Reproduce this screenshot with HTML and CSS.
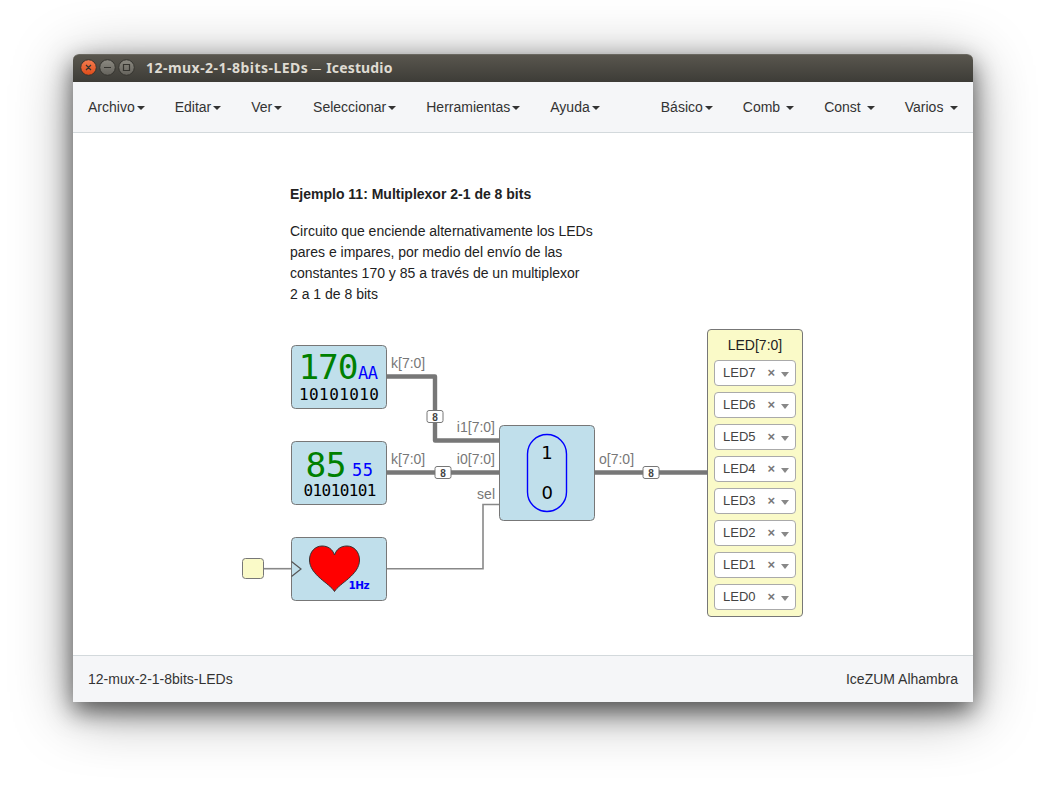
FILE: index.html
```html
<!DOCTYPE html>
<html lang="es">
<head>
<meta charset="utf-8">
<title>12-mux-2-1-8bits-LEDs – Icestudio</title>
<link rel="stylesheet" href="styles.css">
</head>
<body>
<div class="window">
  <header class="titlebar">
    <svg class="controls" width="56" height="18" viewBox="0 0 56 18">
      <defs>
        <linearGradient id="close" x2="0" y2="1"><stop stop-color="#f47c50"/><stop offset="1" stop-color="#df4b18"/></linearGradient>
        <linearGradient id="plain" x2="0" y2="1"><stop stop-color="#8b8981"/><stop offset="1" stop-color="#65635c"/></linearGradient>
      </defs>
      <g stroke="#35342f" stroke-width="1">
        <circle cx="8.500" cy="8.500" r="7.800" fill="url(#close)"/>
        <circle cx="27.500" cy="8.500" r="7.800" fill="url(#plain)"/>
        <circle cx="46.500" cy="8.500" r="7.800" fill="url(#plain)"/>
        <path d="M6 6l5 5m0-5l-5 5M24 8.500h7M43.500 5.500h6v6h-6z" fill="none" stroke-width="1.200"/>
      </g>
    </svg>
    <span class="title">12-mux-2-1-8bits-LEDs</span><span class="dash">—</span><span class="app">Icestudio</span>
  </header>
  <nav class="menubar">
    <div class="menus">
      <a class="menu">Archivo<i class="caret"></i></a>
      <a class="menu">Editar<i class="caret"></i></a>
      <a class="menu">Ver<i class="caret"></i></a>
      <a class="menu wide">Seleccionar<i class="caret"></i></a>
      <a class="menu">Herramientas<i class="caret"></i></a>
      <a class="menu">Ayuda<i class="caret"></i></a>
    </div>
    <div class="menus">
      <a class="menu">Básico<i class="caret"></i></a>
      <a class="menu spaced">Comb<i class="caret"></i></a>
      <a class="menu spaced">Const<i class="caret"></i></a>
      <a class="menu spaced last">Varios<i class="caret"></i></a>
    </div>
  </nav>
  <main class="canvas">
    <svg class="diagram" width="900" height="522" viewBox="73 133 900 522">
      <g class="bus">
        <path d="M387 376.500H435V440.500H500"/>
        <path d="M387 472.500H500"/>
        <path d="M595 472.500H707"/>
      </g>
      <g class="wire">
        <path d="M387 568.700H483V504.500H500"/>
        <path d="M263 568.700H291"/>
      </g>
      <g class="block">
        <rect x="291.500" y="345.500" width="95" height="63" rx="4"/>
        <rect x="291.500" y="441.500" width="95" height="63" rx="4"/>
        <rect x="291.500" y="537.500" width="95" height="63" rx="4"/>
        <rect x="499.500" y="425.500" width="95" height="95" rx="4"/>
        <rect class="input" x="242.500" y="558.500" width="21" height="20" rx="3"/>
        <path class="clock" d="M291.500 561.500L301 569L291.500 576.500"/>
      </g>
      <g class="width">
        <rect x="427" y="410.500" width="16" height="12" rx="2"/>
        <rect x="435" y="466.500" width="16" height="12" rx="2"/>
        <rect x="643" y="466.500" width="16" height="12" rx="2"/>
        <text x="435" y="420.500">8</text>
        <text x="443" y="476.500">8</text>
        <text x="651" y="476.500">8</text>
      </g>
      <g class="port">
        <text x="391" y="368">k[7:0]</text>
        <text x="391" y="464">k[7:0]</text>
        <text x="599" y="464">o[7:0]</text>
        <text class="end" x="495" y="432">i1[7:0]</text>
        <text class="end" x="495" y="464">i0[7:0]</text>
        <text class="end" x="495" y="499">sel</text>
      </g>
      <g class="mono">
        <text class="dec" x="298.500" y="379" textLength="60">170</text>
        <text class="hex" x="358" y="379" textLength="20">AA</text>
        <text class="bin" x="299" y="400" textLength="80">10101010</text>
        <text class="dec" x="305.500" y="477" textLength="41">85</text>
        <text class="hex" x="352" y="475.500" textLength="21">55</text>
        <text class="bin" x="303.500" y="496" textLength="73">01010101</text>
      </g>
      <path class="heart" d="M334.500 591.500C330 583.500 309.500 575 309.500 560C309.500 552 315 546 322 546C328 546 332.500 549 334.500 555C336.500 549 341 546 347 546C354 546 359.500 552 359.500 560C359.500 575 339 583.500 334.500 591.500Z"/>
      <text class="freq" x="348.500" y="589" textLength="21">1Hz</text>
      <rect class="mux" x="527.500" y="434.500" width="39" height="77" rx="19.500"/>
      <text class="sel" x="547" y="459">1</text>
      <text class="sel" x="547.300" y="499">0</text>
    </svg>
    <section class="info">
      <h1>Ejemplo 11: Multiplexor 2-1 de 8 bits</h1>
      <p>Circuito que enciende alternativamente los LEDs<br>pares e impares, por medio del envío de las<br>constantes 170 y 85 a través de un multiplexor<br>2 a 1 de 8 bits</p>
    </section>
    <section class="leds">
      <h2>LED[7:0]</h2>
      <div class="select">LED7<b>×</b><i></i></div>
      <div class="select">LED6<b>×</b><i></i></div>
      <div class="select">LED5<b>×</b><i></i></div>
      <div class="select">LED4<b>×</b><i></i></div>
      <div class="select">LED3<b>×</b><i></i></div>
      <div class="select">LED2<b>×</b><i></i></div>
      <div class="select">LED1<b>×</b><i></i></div>
      <div class="select">LED0<b>×</b><i></i></div>
    </section>
  </main>
  <footer class="statusbar"><span>12-mux-2-1-8bits-LEDs</span><span>IceZUM Alhambra</span></footer>
</div>
</body>
</html>
```
FILE: styles.css
```css
* { box-sizing: border-box; }
body {
  margin: 0;
  padding: 54px 65px 83px 73px;
  height: 785px;
  overflow: hidden;
  background: #fff;
  color: #333;
  font: 14px/20px "Liberation Sans", Arial, sans-serif;
}
.window {
  display: flex;
  flex-direction: column;
  width: 900px;
  height: 648px;
  border-radius: 6px 6px 0 0;
  box-shadow: 0 9px 24px rgba(0,0,0,.58), 0 10px 60px rgba(0,0,0,.38);
}
.titlebar {
  display: flex;
  align-items: center;
  height: 28px;
  padding: 0 0 1px 7px;
  border-radius: 6px 6px 0 0;
  border-top: 1px solid #6a6860;
  background: linear-gradient(#59564e, #3d3c37);
  color: #dfdbd2;
  font: bold 14px/20px "Noto Sans", sans-serif;
  white-space: nowrap;
}
.title { margin-left: 10px; letter-spacing: .47px; }
.dash { width: 10px; margin: 0 5px 0 3px; font-size: 10px; font-weight: normal; }
.app { letter-spacing: .15px; }
.menubar {
  display: flex;
  justify-content: space-between;
  height: 51px;
  background: #f5f6f8;
  border-bottom: 1px solid #d3d9dc;
}
.menus { display: flex; }
.menu {
  display: flex;
  align-items: center;
  padding: 0 15px;
}
.wide { padding-left: 15.8px; }
.caret {
  margin: 1px 0 0 2px;
  border: 4px solid transparent;
  border-top-color: #333;
  border-bottom: 0;
}
.spaced .caret { margin-left: 6px; }
.last .caret { margin-left: 6.6px; }
.canvas {
  position: relative;
  height: 522px;
  background: #fff;
}
.diagram { display: block; }
.bus { fill: none; stroke: #777; stroke-width: 4.4; stroke-linejoin: round; }
.wire { fill: none; stroke: #888; stroke-width: 1.6; }
.block { fill: #c0dfeb; stroke: #777; }
.block .input { fill: #fafac8; }
.block .clock { fill: none; stroke: #555; stroke-width: 1.2; }
.width rect { fill: #fff; stroke: #777; }
.width text { font-size: 10px; font-weight: bold; text-anchor: middle; fill: #444; }
.port text { fill: #777; }
.port .end { text-anchor: end; }
.mono { font-family: "DejaVu Sans Mono", monospace; }
.dec { font-size: 34.5px; fill: #008000; }
.hex { font-size: 17px; fill: #00f; }
.bin { font-size: 16px; fill: #000; }
.heart { fill: #f00; stroke: #333; }
.freq { font: bold 10.5px "DejaVu Sans", sans-serif; fill: #00f; }
.mux { fill: none; stroke: #00f; stroke-width: 1.4; }
.sel { font: 18px "DejaVu Sans", sans-serif; text-anchor: middle; fill: #000; }
.info {
  position: absolute;
  left: 217px;
  top: 51px;
  line-height: 21px;
  color: #222;
}
.info h1 { margin: 0 0 16px; font-size: 14px; line-height: 21px; }
.info p { margin: 0; white-space: nowrap; }
.leds {
  position: absolute;
  left: 634px;
  top: 196px;
  display: flex;
  flex-direction: column;
  gap: 6px;
  width: 96px;
  height: 288px;
  padding: 5px 6px;
  border: 1px solid #777;
  border-radius: 4px;
  background: #fafac8;
}
.leds h2 {
  margin: 0 0 -1px;
  font-size: 14px;
  font-weight: normal;
  line-height: 20px;
  text-align: center;
  color: #222;
}
.select {
  display: flex;
  align-items: center;
  height: 26px;
  padding: 0 6px 1px 8px;
  border: 1px solid #aaa;
  border-radius: 4px;
  background: #fff;
  color: #444;
  font-size: 13px;
}
.select b { margin-left: auto; color: #777; }
.select i {
  margin: 4px 0 0 6px;
  border: 4px solid transparent;
  border-top: 5px solid #888;
  border-bottom: 0;
}
.statusbar {
  display: flex;
  justify-content: space-between;
  height: 47px;
  padding: 13px 15px 0;
  border-top: 1px solid #d3d9dc;
  background: #f5f6f8;
}
```
